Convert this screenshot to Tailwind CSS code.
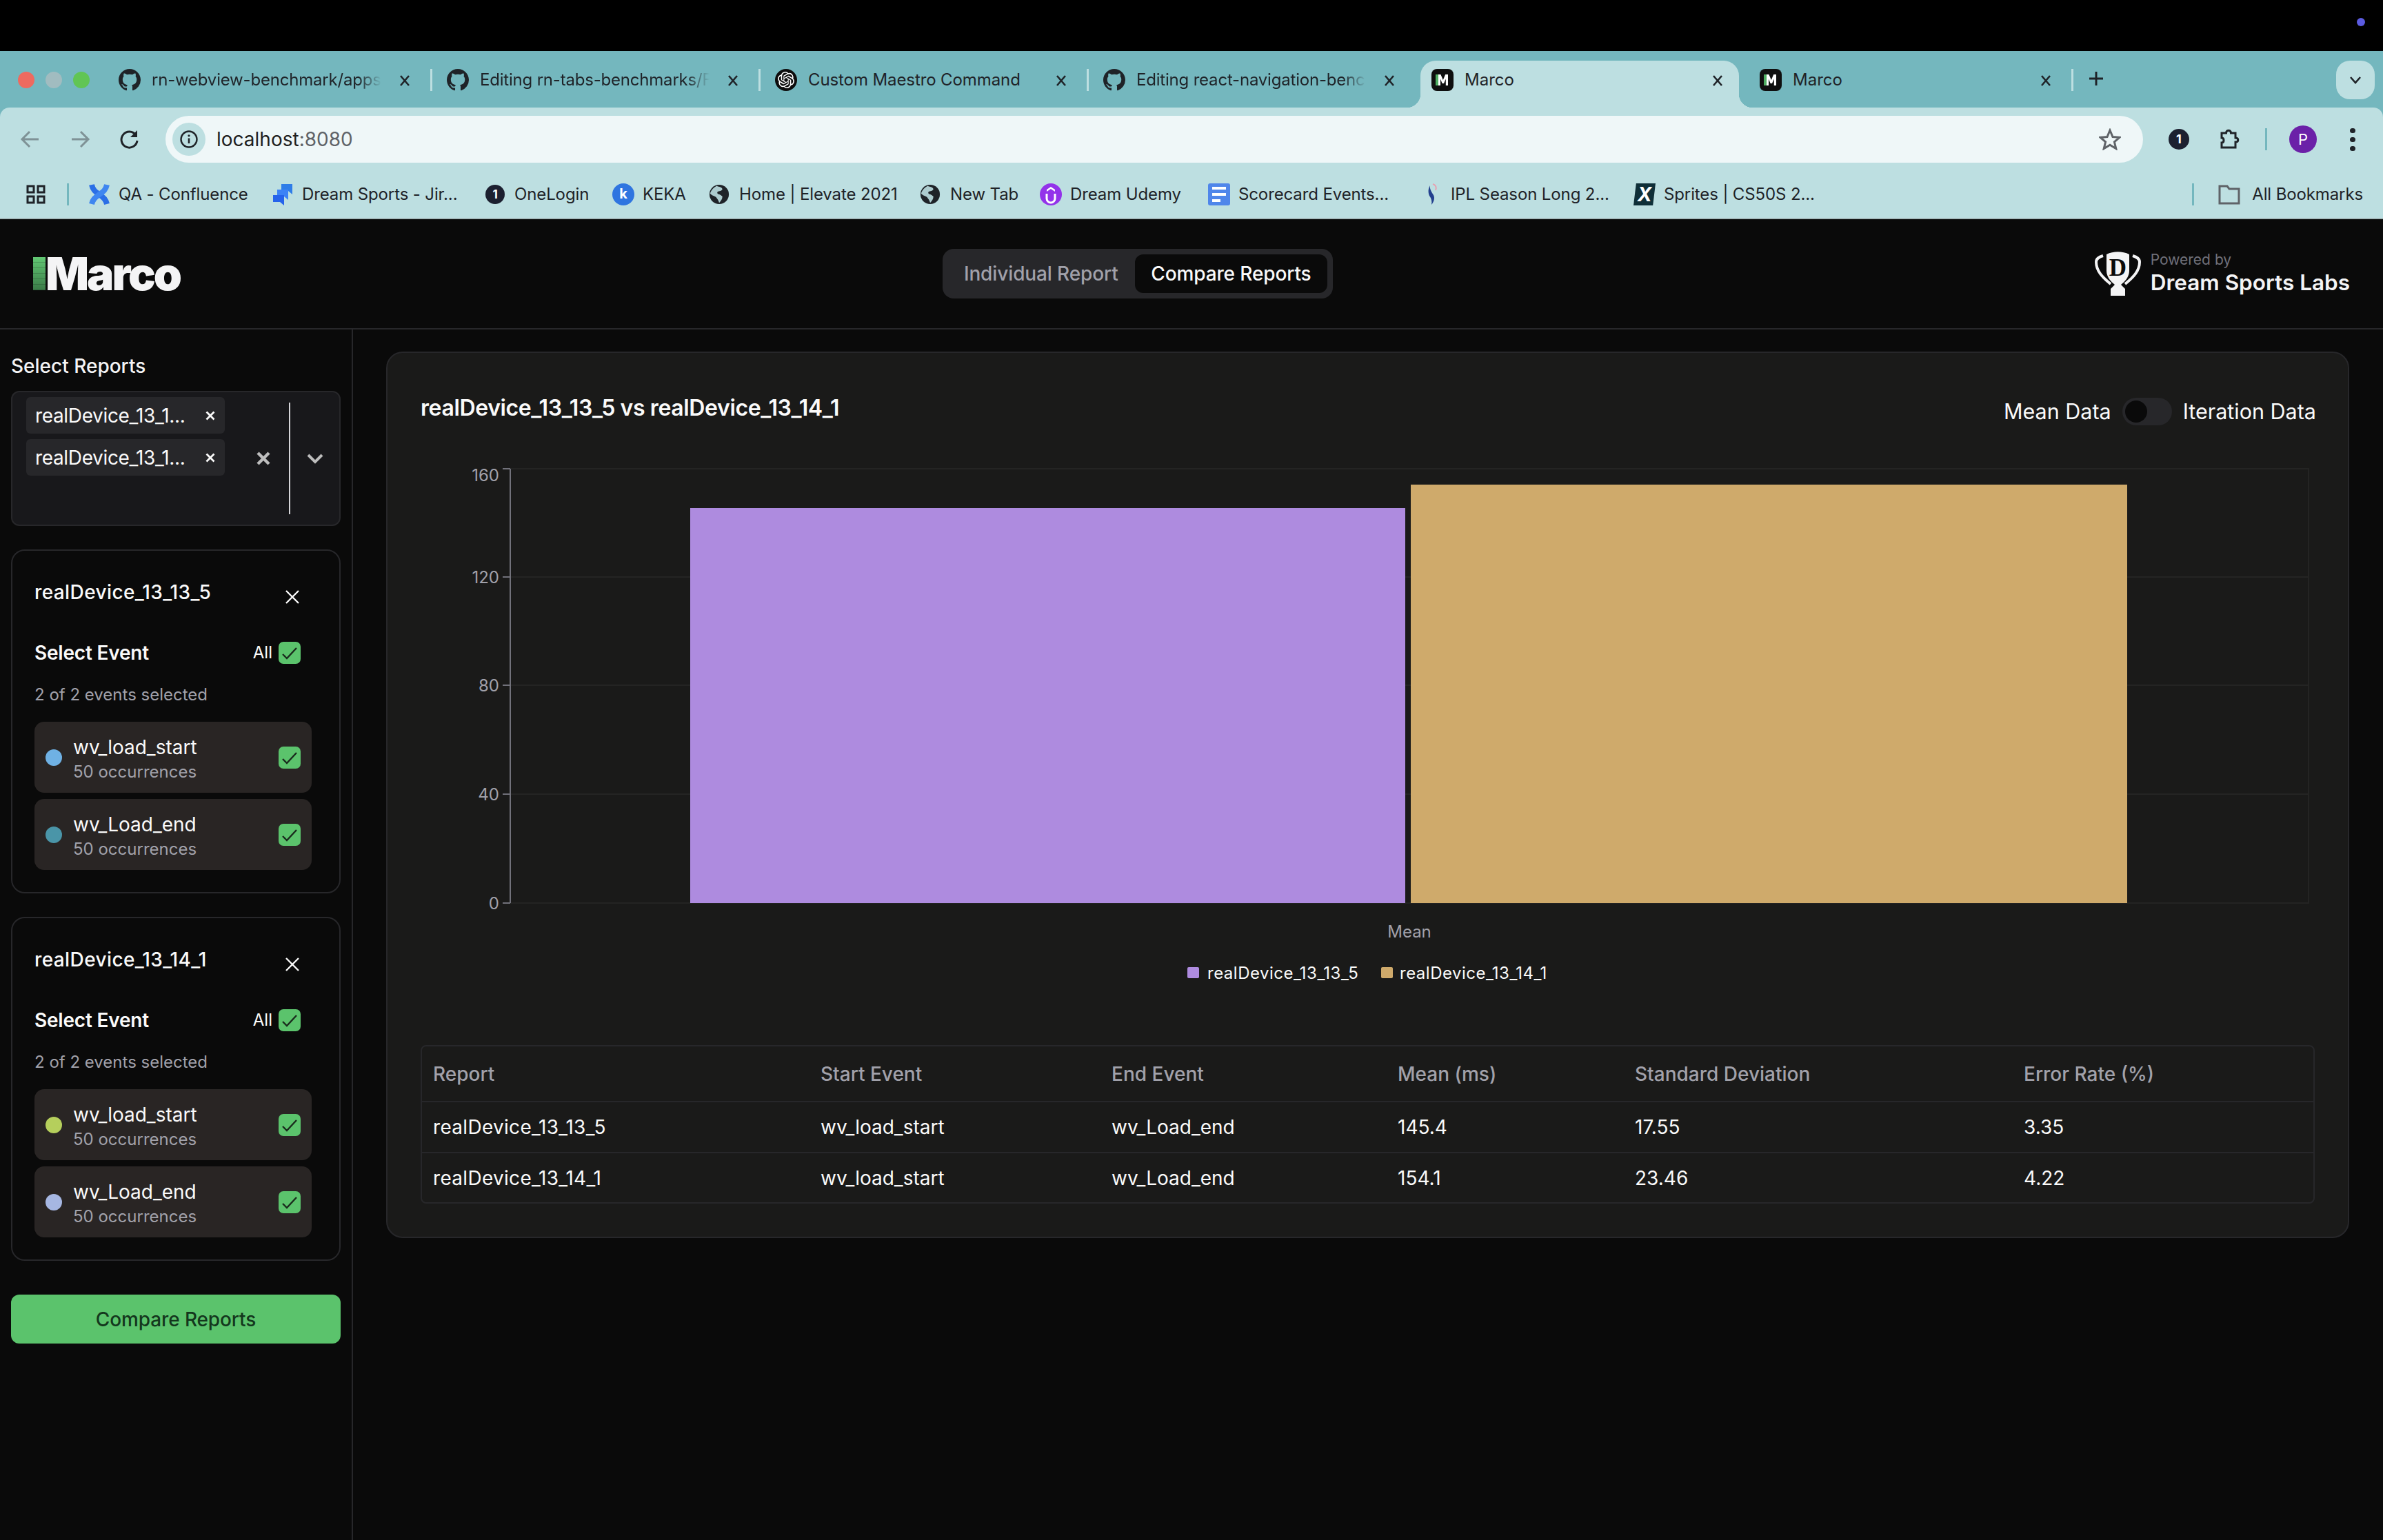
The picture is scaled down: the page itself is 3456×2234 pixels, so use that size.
<!DOCTYPE html>
<html lang="en">
<head>
    <meta charset="UTF-8">
    <title>Marco</title>
    <script src="https://cdn.jsdelivr.net/npm/@tailwindcss/browser@4"></script>
</head>
<body class="bg-[#0a0a0a] [font-family:Inter,sans-serif]">
<svg class="hidden">
    <symbol id="gh" viewBox="0 0 16 16"><path fill="#1f2328" d="M8 0C3.58 0 0 3.58 0 8c0 3.54 2.29 6.53 5.47 7.59.4.07.55-.17.55-.38 0-.19-.01-.82-.01-1.49-2.01.37-2.53-.49-2.69-.94-.09-.23-.48-.94-.82-1.13-.28-.15-.68-.52-.01-.53.63-.01 1.08.58 1.23.82.72 1.21 1.87.87 2.33.66.07-.52.28-.87.51-1.07-1.78-.2-3.64-.89-3.64-3.95 0-.87.31-1.59.82-2.15-.08-.2-.36-1.02.08-2.12 0 0 .67-.21 2.2.82.64-.18 1.32-.27 2-.27.68 0 1.36.09 2 .27 1.53-1.04 2.2-.82 2.2-.82.44 1.1.16 1.92.08 2.12.51.56.82 1.27.82 2.15 0 3.07-1.87 3.75-3.65 3.95.29.25.54.73.54 1.48 0 1.07-.01 1.93-.01 2.2 0 .21.15.46.55.38A8.013 8.013 0 0016 8c0-4.42-3.58-8-8-8z"/></symbol>
    <symbol id="tabx" viewBox="0 0 24 24"><path d="M6 5l12 14M18 5L6 19" stroke="#1f2328" stroke-width="2.6" fill="none"/></symbol>
    <symbol id="marco" viewBox="0 0 32 32"><rect width="32" height="32" rx="8" fill="#0f0f0f"/><rect x="6" y="8" width="4" height="16" fill="#4fae62"/><path d="M10 24V8h3.4l3.4 8 3.4-8H24v16h-3.2v-9.5L18 21h-2.4l-2.6-6.500V24z" fill="#fff"/></symbol>
    <symbol id="check" viewBox="0 0 32 32"><rect width="32" height="32" rx="7" fill="#5bc36c"/><path d="M6 18l6 6L26 9" stroke="#1a2b1d" stroke-width="2.400" fill="none"/></symbol>
    <symbol id="closex" viewBox="0 0 20 20"><path d="M1 1l18 18M19 1L1 19" stroke="#fafafa" stroke-width="2.400" fill="none"/></symbol>
    <symbol id="chipx" viewBox="0 0 14 14"><path d="M1.500 1.500l11 11M12.500 1.500l-11 11" stroke="#fafafa" stroke-width="2.800" fill="none"/></symbol>
    <symbol id="globe" viewBox="0 0 32 32"><circle cx="16" cy="16" r="15" fill="#1f2328"/><path d="M12 3c4 2 8 1 9 5-2 4-7 2-8 5 0 4 6 2 8 6 0 4-2 7-5 10-1-4-3-6-5-9-3-2-8-3-9-6 2-5 6-9 10-11z" fill="#bddfe1" opacity=".9"/><path d="M16 12c5-2 11 0 13 4l-2 7-5-4c-3-1-6-3-6-7z" fill="#1f2328"/></symbol>
</svg>

<div class="w-[3456px] h-[2234px] overflow-hidden">
    <!-- menu bar -->
    <div class="h-[74px] bg-black flex justify-end items-center pr-[26px]">
        <div class="w-[12px] h-[12px] rounded-full bg-[#5b5be0] -mt-[10px]"></div>
    </div>

    <!-- browser chrome -->
    <div class="bg-[#74b7be]">
        <div class="h-[82px] pt-[14px] flex">
            <div class="w-[149px] h-[32px] mt-[12px] flex gap-[16px] pl-[26px]">
                <div class="w-[24px] h-[24px] mt-[4px] rounded-full bg-[#ee6a5f]"></div>
                <div class="w-[24px] h-[24px] mt-[4px] rounded-full bg-[#a1bcc0]"></div>
                <div class="w-[24px] h-[24px] mt-[4px] rounded-full bg-[#61c554]"></div>
            </div>
            <div class="w-[476px] h-[68px] pt-[12px] pl-[23px] flex text-[24px] leading-[32px] tracking-[-0.2px] text-[#1f2328]">
                <svg class="w-[32px] h-[32px] shrink-0"><use href="#gh"/></svg>
                <span class="w-[333px] shrink-0 ml-[16px] whitespace-nowrap [mask-image:linear-gradient(to_right,black_90%,transparent_100%)]">rn-webview-benchmark/apps</span>
                <svg class="w-[24px] h-[24px] ml-[22px] mt-[5px] shrink-0"><use href="#tabx"/></svg>
                <div class="w-[3px] h-[32px] ml-[25px] -mr-[3px] shrink-0 bg-[#bddfe1]"></div>
            </div>
            <div class="w-[476px] h-[68px] pt-[12px] pl-[23px] flex text-[24px] leading-[32px] tracking-[-0.2px] text-[#1f2328]">
                <svg class="w-[32px] h-[32px] shrink-0"><use href="#gh"/></svg>
                <span class="w-[333px] shrink-0 ml-[16px] whitespace-nowrap [mask-image:linear-gradient(to_right,black_90%,transparent_100%)]">Editing rn-tabs-benchmarks/F</span>
                <svg class="w-[24px] h-[24px] ml-[22px] mt-[5px] shrink-0"><use href="#tabx"/></svg>
                <div class="w-[3px] h-[32px] ml-[25px] -mr-[3px] shrink-0 bg-[#bddfe1]"></div>
            </div>
            <div class="w-[476px] h-[68px] pt-[12px] pl-[23px] flex text-[24px] leading-[32px] tracking-[-0.1px] text-[#1f2328]">
                <svg class="w-[32px] h-[32px] shrink-0" viewBox="-4 -4 32 32"><circle cx="12" cy="12" r="16" fill="#0d0d0d"/><path fill="#fff" d="M22.2819 9.8211a5.9847 5.9847 0 0 0-.5157-4.9108 6.0462 6.0462 0 0 0-6.5098-2.9A6.0651 6.0651 0 0 0 4.9807 4.1818a5.9847 5.9847 0 0 0-3.9977 2.9 6.0462 6.0462 0 0 0 .7427 7.0966 5.98 5.98 0 0 0 .511 4.9107 6.051 6.051 0 0 0 6.5146 2.9001A5.9847 5.9847 0 0 0 13.2599 24a6.0557 6.0557 0 0 0 5.7718-4.2058 5.9894 5.9894 0 0 0 3.9977-2.9001 6.0557 6.0557 0 0 0-.7475-7.0729zm-9.022 12.6081a4.4755 4.4755 0 0 1-2.8764-1.0408l.1419-.0804 4.7783-2.7582a.7948.7948 0 0 0 .3927-.6813v-6.7369l2.02 1.1686a.071.071 0 0 1 .038.052v5.5826a4.504 4.504 0 0 1-4.4945 4.4944zm-9.6607-4.1254a4.4708 4.4708 0 0 1-.5346-3.0137l.142.0852 4.783 2.7582a.7712.7712 0 0 0 .7806 0l5.8428-3.3685v2.3324a.0804.0804 0 0 1-.0332.0615L9.74 19.9502a4.4992 4.4992 0 0 1-6.1408-1.6464zM2.3408 7.8956a4.485 4.485 0 0 1 2.3655-1.9728V11.6a.7664.7664 0 0 0 .3879.6765l5.8144 3.3543-2.0201 1.1685a.0757.0757 0 0 1-.071 0l-4.8303-2.7865A4.504 4.504 0 0 1 2.3408 7.872zm16.5963 3.8558L13.1038 8.364 15.1192 7.2a.0757.0757 0 0 1 .071 0l4.8303 2.7913a4.4944 4.4944 0 0 1-.6765 8.1042v-5.6772a.79.79 0 0 0-.407-.667zm2.0107-3.0231l-.142-.0852-4.7735-2.7818a.7759.7759 0 0 0-.7854 0L9.409 9.2297V6.8974a.0662.0662 0 0 1 .0284-.0615l4.8303-2.7866a4.4992 4.4992 0 0 1 6.6802 4.66zM8.3065 12.863l-2.02-1.1638a.0804.0804 0 0 1-.038-.0567V6.0742a4.4992 4.4992 0 0 1 7.3757-3.4537l-.142.0805L8.704 5.459a.7948.7948 0 0 0-.3927.6813zm1.0976-2.3654l2.602-1.4998 2.6069 1.4998v2.9994l-2.5974 1.4997-2.6067-1.4997Z"/></svg>
                <span class="w-[333px] shrink-0 ml-[16px] whitespace-nowrap">Custom Maestro Command</span>
                <svg class="w-[24px] h-[24px] ml-[22px] mt-[5px] shrink-0"><use href="#tabx"/></svg>
                <div class="w-[3px] h-[32px] ml-[25px] -mr-[3px] shrink-0 bg-[#bddfe1]"></div>
            </div>
            <div class="w-[476px] h-[68px] pt-[12px] pl-[23px] flex text-[24px] leading-[32px] tracking-[-0.2px] text-[#1f2328]">
                <svg class="w-[32px] h-[32px] shrink-0"><use href="#gh"/></svg>
                <span class="w-[333px] shrink-0 ml-[16px] whitespace-nowrap [mask-image:linear-gradient(to_right,black_90%,transparent_100%)]">Editing react-navigation-benc</span>
                <svg class="w-[24px] h-[24px] ml-[22px] mt-[5px] shrink-0"><use href="#tabx"/></svg>
            </div>
            <!-- active tab -->
            <div class="w-[476px] h-[68px] px-[7px]">
                <div class="relative h-full bg-[#bddfe1] rounded-t-[22px] pt-[12px] pl-[16px] flex text-[24px] leading-[32px] text-[#1f2328]">
                    <div class="absolute -left-[20px] bottom-0 w-[20px] h-[20px] bg-[radial-gradient(circle_at_0_0,#74b7be_20px,#bddfe1_20.5px)]"></div>
                    <div class="absolute -right-[20px] bottom-0 w-[20px] h-[20px] bg-[radial-gradient(circle_at_100%_0,#74b7be_20px,#bddfe1_20.5px)]"></div>
                    <svg class="w-[32px] h-[32px] shrink-0"><use href="#marco"/></svg>
                    <span class="w-[333px] shrink-0 ml-[16px]">Marco</span>
                    <svg class="w-[24px] h-[24px] ml-[22px] mt-[5px] shrink-0"><use href="#tabx"/></svg>
                </div>
            </div>
            <div class="w-[476px] h-[68px] pt-[12px] pl-[23px] flex text-[24px] leading-[32px] text-[#1f2328]">
                <svg class="w-[32px] h-[32px] shrink-0"><use href="#marco"/></svg>
                <span class="w-[333px] shrink-0 ml-[16px]">Marco</span>
                <svg class="w-[24px] h-[24px] ml-[22px] mt-[5px] shrink-0"><use href="#tabx"/></svg>
                <div class="w-[3px] h-[32px] ml-[25px] -mr-[3px] shrink-0 bg-[#bddfe1]"></div>
            </div>
            <svg class="w-[24px] h-[24px] ml-[23px] mt-[14px] shrink-0" viewBox="0 0 24 24"><path d="M12 2v20M2 12h20" stroke="#1f2328" stroke-width="3"/></svg>
            <div class="w-[56px] h-[56px] ml-[336px] shrink-0 rounded-[20px] bg-[#bddfe1] flex items-center justify-center">
                <svg class="w-[20px] h-[14px]" viewBox="0 0 20 14"><path d="M3 3l7 8 7-8" stroke="#1f2328" stroke-width="2.600" fill="none"/></svg>
            </div>
        </div>

        <div class="h-[162px] pt-[12px] bg-[#bddfe1] rounded-t-[14px] border-b-2 border-[#a7bcbe]">
            <!-- toolbar -->
            <div class="h-[68px] flex items-center pl-[28px]">
                <svg class="w-[32px] h-[32px]" viewBox="0 0 32 32"><path d="M28 16H5M15 5L4 16l11 11" stroke="#7f9296" stroke-width="3" fill="none"/></svg>
                <svg class="w-[32px] h-[32px] ml-[40px]" viewBox="0 0 32 32"><path d="M4 16h23M17 5l11 11-11 11" stroke="#7f9296" stroke-width="3" fill="none"/></svg>
                <svg class="w-[32px] h-[32px] ml-[40px]" viewBox="0 0 32 32"><path d="M25 10a11.500 11.500 0 1 0 2 8" stroke="#1f2328" stroke-width="3" fill="none"/><path d="M27 3v10H17z" fill="#1f2328"/></svg>
                <div class="w-[2868px] h-[68px] ml-[36px] bg-[#eff7f8] rounded-full flex items-center pl-[10px] pr-[32px]">
                    <div class="w-[48px] h-[48px] rounded-full bg-[#bddfe1] flex items-center justify-center">
                        <svg class="w-[26px] h-[26px]" viewBox="0 0 26 26"><circle cx="13" cy="13" r="11.500" stroke="#1f2328" stroke-width="2.400" fill="none"/><path d="M13 11.500v7.500" stroke="#1f2328" stroke-width="2.600"/><circle cx="13" cy="7.800" r="1.600" fill="#1f2328"/></svg>
                    </div>
                    <span class="ml-[16px] text-[28px] leading-[34px] text-[#1f1f1f]">localhost<span class="text-[#5f6368]">:8080</span></span>
                    <svg class="w-[32px] h-[32px] ml-auto" viewBox="0 0 32 32"><path d="M16 3l4 9.500 10 .8-7.600 6.500 2.400 9.800L16 24.300 7.200 29.600l2.400-9.800L2 13.300l10-.8z" stroke="#5f6368" stroke-width="3" fill="none"/></svg>
                </div>
                <div class="w-[30px] h-[30px] ml-[37px] rounded-full bg-[#1c2030] text-white text-[18px] leading-[30px] font-bold text-center">1</div>
                <svg class="w-[32px] h-[32px] ml-[42px]" viewBox="0 0 32 32"><path d="M5 7h6.500c0-5 7-5 7 0H25v7c5 0 5 6 0 6v8H5v-7c4 0 4-7 0-7z" stroke="#1f2328" stroke-width="3" fill="none"/></svg>
                <div class="w-[3px] h-[32px] ml-[36px] bg-[#74b7be]"></div>
                <div class="w-[40px] h-[40px] ml-[32px] rounded-full bg-[#6b21a8] text-white text-[22px] leading-[40px] text-center">P</div>
                <div class="w-[8px] ml-[48px] flex flex-col gap-[6px]">
                    <div class="w-[8px] h-[7px] rounded-full bg-[#1f2328]"></div>
                    <div class="w-[8px] h-[7px] rounded-full bg-[#1f2328]"></div>
                    <div class="w-[8px] h-[7px] rounded-full bg-[#1f2328]"></div>
                </div>
            </div>

            <!-- bookmarks bar -->
            <div class="h-[68px] mt-[12px] flex items-center pl-[38px] text-[24px] tracking-[-0.12px] text-[#1f2328] whitespace-nowrap">
                <svg class="w-[28px] h-[28px]" viewBox="0 0 28 28"><path d="M2 2h9v9H2zM17 2h9v9h-9zM2 17h9v9H2zM17 17h9v9h-9z" stroke="#1f2328" stroke-width="3" fill="none"/></svg>
                <div class="w-[3px] h-[32px] ml-[31px] mr-[28px] bg-[#74b7be]"></div>
                <div class="flex items-center w-[266px]">
                    <svg class="w-[32px] h-[32px] mr-[12px] shrink-0" viewBox="0 0 32 32"><path d="M5 2c2 9 7 11 11 14 5 4 9 6 11 14" stroke="#2b6fe6" stroke-width="8" fill="none"/><path d="M27 2c-2 9-7 11-11 14-5 4-9 6-11 14" stroke="#3f86f0" stroke-width="8" fill="none"/></svg>
                    QA - Confluence
                </div>
                <div class="flex items-center w-[308px]">
                    <svg class="w-[32px] h-[34px] mr-[12px] shrink-0" viewBox="0 0 32 34"><path d="M14 2h16v15l-6-5H14z" fill="#2f7de8"/><path d="M8 10h16v15l-6-5H8z" fill="#3b82f6"/><path d="M2 18h16v15l-6-5H2z" fill="#2563eb"/></svg>
                    Dream Sports - Jir...
                </div>
                <div class="flex items-center w-[186px]">
                    <div class="w-[28px] h-[28px] mr-[14px] ml-[2px] shrink-0 rounded-full bg-[#1c2030] text-white text-[17px] leading-[28px] font-bold text-center">1</div>
                    OneLogin
                </div>
                <div class="flex items-center w-[140px]">
                    <div class="w-[32px] h-[32px] mr-[12px] shrink-0 rounded-full bg-[#2f75e0] text-white text-[20px] leading-[30px] font-bold text-center">k</div>
                    KEKA
                </div>
                <div class="flex items-center w-[306px]">
                    <svg class="w-[30px] h-[30px] mr-[14px] shrink-0"><use href="#globe"/></svg>
                    Home | Elevate 2021
                </div>
                <div class="flex items-center w-[174px]">
                    <svg class="w-[30px] h-[30px] mr-[14px] shrink-0"><use href="#globe"/></svg>
                    New Tab
                </div>
                <div class="flex items-center w-[244px]">
                    <svg class="w-[32px] h-[32px] mr-[12px] shrink-0" viewBox="0 0 32 32"><circle cx="16" cy="16" r="16" fill="#9333ea"/><path d="M10 15v7a6 6 0 0 0 12 0v-7" stroke="#fff" stroke-width="3" fill="none"/><path d="M16 5l6 4v3l-6-4-6 4V9z" fill="#fff"/></svg>
                    Dream Udemy
                </div>
                <div class="flex items-center w-[308px]">
                    <svg class="w-[32px] h-[32px] mr-[12px] shrink-0" viewBox="0 0 32 32"><rect width="32" height="32" rx="3" fill="#4f86ea"/><path d="M6 5h20v4H6zM6 14h20v4H6zM6 23h12v4H6z" fill="#fff"/></svg>
                    Scorecard Events...
                </div>
                <div class="flex items-center w-[309px]">
                    <svg class="w-[20px] h-[32px] mr-[18px] ml-[6px] shrink-0" viewBox="0 0 20 32"><path d="M8 3c-1 5 2 9 5 14 2 4 1 9-3 14 1-5 0-9-3-13C5 13 5 8 8 3z" fill="#23408e"/><path d="M12 1c4 1 6 5 4 9" stroke="#e8a0b0" stroke-width="2" fill="none"/></svg>
                    IPL Season Long 2...
                </div>
                <div class="flex items-center">
                    <div class="w-[32px] h-[32px] mr-[12px] shrink-0 bg-[#0f2f38] text-white text-[28px] leading-[32px] font-bold italic text-center [clip-path:polygon(12%_0,100%_0,88%_100%,0_100%)]">X</div>
                    Sprites | CS50S 2...
                </div>
                <div class="ml-auto flex items-center pr-[29px]">
                    <div class="w-[3px] h-[32px] mr-[35px] bg-[#74b7be]"></div>
                    <svg class="w-[32px] h-[32px] mr-[17px]" viewBox="0 0 32 32"><path d="M2 4h11l3 4h14v21H2z" stroke="#5f6368" stroke-width="3" fill="none"/></svg>
                    All Bookmarks
                </div>
            </div>
        </div>
    </div>

    <!-- app header -->
    <header class="h-[160px] flex justify-between items-center pl-[48px] pr-[48px] border-b-2 border-[#27272a]">
        <div class="flex items-center h-[48px] w-[214px]">
            <div class="w-[18px] h-[48px] bg-[repeating-linear-gradient(to_bottom,transparent_0,transparent_7px,rgba(0,0,0,.18)_7px,rgba(0,0,0,.18)_8px),linear-gradient(to_bottom,#62c873,#3b7a48)]"></div>
            <span class="text-[66px] leading-[48px] font-black tracking-[-3px] text-[#f4f4f5]">Marco</span>
        </div>
        <div class="w-[566px] h-[72px] bg-[#27272a] rounded-[16px] flex items-center pl-[31px] pr-[8px] justify-between text-[28px] font-medium tracking-[-0.12px]">
            <span class="text-[#a1a1aa]">Individual Report</span>
            <span class="w-[279px] h-[56px] rounded-[12px] bg-[#0a0a0a] text-[#fafafa] leading-[56px] text-center">Compare Reports</span>
        </div>
        <div class="flex items-center gap-[14px]">
            <svg class="w-[67px] h-[64px]" viewBox="0 0 65 64">
                <path d="M16 4c10-5 23-5 33 0v24c0 9-7 16-12 20l6 6v10H22V54l6-6c-5-4-12-11-12-20z" fill="#f4f4f5"/>
                <path d="M11 6c-6 2-10 4-10 9 0 13 9 22 21 32" stroke="#f4f4f5" stroke-width="4" fill="none"/>
                <path d="M54 6c6 2 10 4 10 9 0 13-9 22-21 32" stroke="#f4f4f5" stroke-width="4" fill="none"/>
                <text x="32.500" y="35" text-anchor="middle" font-size="35" font-weight="700" fill="#0a0a0a" font-family="Liberation Serif">D</text>
            </svg>
            <div class="flex flex-col">
                <span class="text-[21px] leading-[26px] text-[#71717a]">Powered by</span>
                <span class="text-[31.5px] leading-[40px] font-semibold text-[#f4f4f5]">Dream Sports Labs</span>
            </div>
        </div>
    </header>

    <div class="flex">
        <!-- sidebar -->
        <aside class="w-[512px] h-[1756px] shrink-0 border-r-2 border-[#27272a] px-[16px] pt-[35px]">
            <div class="text-[28px] leading-[36px] font-medium text-[#f4f4f5]">Select Reports</div>
            <div class="h-[196px] mt-[18px] bg-[#18181b] border-2 border-[#27272a] rounded-[12px] flex text-[28px] text-[#fafafa]">
                <div class="pl-[20px] pt-[7px] flex flex-col gap-[8px]">
                    <div class="w-[288px] h-[53px] bg-[#27272a] rounded-[6px] flex items-center pl-[13px]">
                        <span class="w-[219px] whitespace-nowrap tracking-[-0.35px]">realDevice_13_1...</span>
                        <svg class="w-[14px] h-[14px] ml-[28px]"><use href="#chipx"/></svg>
                    </div>
                    <div class="w-[288px] h-[53px] bg-[#27272a] rounded-[6px] flex items-center pl-[13px]">
                        <span class="w-[219px] whitespace-nowrap tracking-[-0.35px]">realDevice_13_1...</span>
                        <svg class="w-[14px] h-[14px] ml-[28px]"><use href="#chipx"/></svg>
                    </div>
                </div>
                <div class="flex items-center">
                    <svg class="w-[20px] h-[20px] ml-[46px]" viewBox="0 0 20 20"><path d="M2 2l16 16M18 2L2 18" stroke="#bdbdbd" stroke-width="4.500" fill="none"/></svg>
                    <div class="w-[2px] h-[162px] ml-[27px] bg-[#d4d4d8]"></div>
                    <svg class="w-[24px] h-[16px] ml-[24px]" viewBox="0 0 24 16"><path d="M2 3l10 10L22 3" stroke="#bdbdbd" stroke-width="4" fill="none"/></svg>
                </div>
            </div>

            <!-- report 1 -->
            <div class="mt-[34px] border-2 border-[#27272a] rounded-[20px] pl-[32px] pr-[40px] pt-[42px] pb-[32px]">
                <div class="flex justify-between pr-[18px]">
                    <span class="text-[28px] leading-[36px] font-medium tracking-[0.4px] text-[#fafafa]">realDevice_13_13_5</span>
                    <svg class="w-[20px] h-[20px] mt-[15px]"><use href="#closex"/></svg>
                </div>
                <div class="mt-[52px] h-[36px] flex items-center justify-between pr-[16px]">
                    <span class="text-[28px] font-semibold tracking-[-0.2px] text-[#fafafa]">Select Event</span>
                    <div class="flex items-center gap-[9px] text-[24px] text-[#fafafa]">All<svg class="w-[32px] h-[32px]"><use href="#check"/></svg></div>
                </div>
                <div class="mt-[27px] text-[24px] leading-[32px] text-[#a1a1aa]">2 of 2 events selected</div>
                <div class="mt-[23px] flex flex-col gap-[9px]">
                    <div class="h-[103px] bg-[#292524] rounded-[14px] flex items-center pl-[16px] pr-[16px]">
                        <div class="w-[24px] h-[24px] rounded-full bg-[#6fb1e4]"></div>
                        <div class="ml-[16px] pt-[5px] flex flex-col">
                            <span class="text-[28px] leading-[36px] text-[#fafafa]">wv_load_start</span>
                            <span class="mt-[2px] text-[24px] leading-[32px] text-[#a1a1aa]">50 occurrences</span>
                        </div>
                        <svg class="w-[32px] h-[32px] ml-auto"><use href="#check"/></svg>
                    </div>
                    <div class="h-[103px] bg-[#292524] rounded-[14px] flex items-center pl-[16px] pr-[16px]">
                        <div class="w-[24px] h-[24px] rounded-full bg-[#4a95a8]"></div>
                        <div class="ml-[16px] pt-[5px] flex flex-col">
                            <span class="text-[28px] leading-[36px] text-[#fafafa]">wv_Load_end</span>
                            <span class="mt-[2px] text-[24px] leading-[32px] text-[#a1a1aa]">50 occurrences</span>
                        </div>
                        <svg class="w-[32px] h-[32px] ml-auto"><use href="#check"/></svg>
                    </div>
                </div>
            </div>

            <!-- report 2 -->
            <div class="mt-[34px] border-2 border-[#27272a] rounded-[20px] pl-[32px] pr-[40px] pt-[42px] pb-[32px]">
                <div class="flex justify-between pr-[18px]">
                    <span class="text-[28px] leading-[36px] font-medium tracking-[0.4px] text-[#fafafa]">realDevice_13_14_1</span>
                    <svg class="w-[20px] h-[20px] mt-[15px]"><use href="#closex"/></svg>
                </div>
                <div class="mt-[52px] h-[36px] flex items-center justify-between pr-[16px]">
                    <span class="text-[28px] font-semibold tracking-[-0.2px] text-[#fafafa]">Select Event</span>
                    <div class="flex items-center gap-[9px] text-[24px] text-[#fafafa]">All<svg class="w-[32px] h-[32px]"><use href="#check"/></svg></div>
                </div>
                <div class="mt-[27px] text-[24px] leading-[32px] text-[#a1a1aa]">2 of 2 events selected</div>
                <div class="mt-[23px] flex flex-col gap-[9px]">
                    <div class="h-[103px] bg-[#292524] rounded-[14px] flex items-center pl-[16px] pr-[16px]">
                        <div class="w-[24px] h-[24px] rounded-full bg-[#b5cf5c]"></div>
                        <div class="ml-[16px] pt-[5px] flex flex-col">
                            <span class="text-[28px] leading-[36px] text-[#fafafa]">wv_load_start</span>
                            <span class="mt-[2px] text-[24px] leading-[32px] text-[#a1a1aa]">50 occurrences</span>
                        </div>
                        <svg class="w-[32px] h-[32px] ml-auto"><use href="#check"/></svg>
                    </div>
                    <div class="h-[103px] bg-[#292524] rounded-[14px] flex items-center pl-[16px] pr-[16px]">
                        <div class="w-[24px] h-[24px] rounded-full bg-[#a6b7e2]"></div>
                        <div class="ml-[16px] pt-[5px] flex flex-col">
                            <span class="text-[28px] leading-[36px] text-[#fafafa]">wv_Load_end</span>
                            <span class="mt-[2px] text-[24px] leading-[32px] text-[#a1a1aa]">50 occurrences</span>
                        </div>
                        <svg class="w-[32px] h-[32px] ml-auto"><use href="#check"/></svg>
                    </div>
                </div>
            </div>

            <button class="w-full h-[71px] mt-[49px] bg-[#5bc36c] rounded-[12px] text-[28px] font-medium tracking-[-0.12px] text-[#14371d]">Compare Reports</button>
        </aside>

        <!-- main -->
        <main class="flex-1 pl-[48px] pr-[49px] pt-[32px]">
            <div class="bg-[#1a1a19] border-2 border-[#27272a] rounded-[24px] px-[48px] pt-[64px] pb-[48px]">
                <div class="flex justify-between h-[42px]">
                    <h2 class="text-[32px] leading-[32px] font-semibold tracking-[-0.38px] text-[#fafafa]">realDevice_13_13_5 vs realDevice_13_14_1</h2>
                    <div class="flex items-center text-[30.5px] text-[#fafafa] -mr-[2px]">
                        Mean Data
                        <div class="w-[72px] h-[40px] mx-[16px] rounded-full bg-[#27272a] p-[4px]"><div class="w-[32px] h-[32px] rounded-full bg-[#0a0a0a]"></div></div>
                        Iteration Data
                    </div>
                </div>

                <!-- chart -->
                <svg class="block mt-[24px] [font-family:Inter,sans-serif]" width="2747" height="800" viewBox="610 640 2747 800">
                    <g stroke="#242423" stroke-width="2" fill="none">
                        <path d="M740 678H3348V1308H740"/>
                        <path d="M740 835H3348M740 992H3348M740 1150H3348"/>
                    </g>
                    <path d="M740 678V1308M729 678H740M729 835H740M729 992H740M729 1150H740M729 1308H740" stroke="#71717a" stroke-width="2" fill="none"/>
                    <g fill="#a1a1aa" font-size="24" text-anchor="end">
                        <text x="724" y="696">160</text>
                        <text x="724" y="844">120</text>
                        <text x="724" y="1001">80</text>
                        <text x="724" y="1159">40</text>
                        <text x="724" y="1317">0</text>
                    </g>
                    <rect x="1001" y="735" width="1037" height="573" fill="#ae8bdf"/>
                    <rect x="2046" y="701" width="1039" height="607" fill="#cfaa6b"/>
                    <text x="2044" y="1358" fill="#a1a1aa" font-size="24" text-anchor="middle">Mean</text>
                    <rect x="1722" y="1401" width="17" height="16" rx="2" fill="#ae8bdf"/>
                    <text x="1751" y="1418" fill="#fafafa" font-size="24" letter-spacing="0.5">realDevice_13_13_5</text>
                    <rect x="2003" y="1401" width="17" height="16" rx="2" fill="#cfaa6b"/>
                    <text x="2030" y="1418" fill="#fafafa" font-size="24" letter-spacing="0.5">realDevice_13_14_1</text>
                </svg>

                <!-- table -->
                <div class="mt-[74px] border-2 border-[#27272a] rounded-[8px]">
                    <table class="w-full table-fixed text-left text-[28px]">
                        <thead>
                            <tr class="h-[80px] border-b-2 border-[#27272a] text-[#a1a1aa]">
                                <th class="w-[563px] pl-[16px] font-medium">Report</th>
                                <th class="w-[422px] pl-[15px] font-medium">Start Event</th>
                                <th class="w-[415px] pl-[15px] font-medium">End Event</th>
                                <th class="w-[344px] pl-[15px] font-medium">Mean (ms)</th>
                                <th class="w-[564px] pl-[15px] font-medium">Standard Deviation</th>
                                <th class="pl-[15px] font-medium">Error Rate (%)</th>
                            </tr>
                        </thead>
                        <tbody class="text-[#fafafa]">
                            <tr class="h-[74px] border-b-2 border-[#27272a]">
                                <td class="pl-[16px] tracking-[0.3px]">realDevice_13_13_5</td>
                                <td class="pl-[15px]">wv_load_start</td>
                                <td class="pl-[15px]">wv_Load_end</td>
                                <td class="pl-[15px]">145.4</td>
                                <td class="pl-[15px]">17.55</td>
                                <td class="pl-[15px]">3.35</td>
                            </tr>
                            <tr class="h-[72px]">
                                <td class="pl-[16px] tracking-[0.3px]">realDevice_13_14_1</td>
                                <td class="pl-[15px]">wv_load_start</td>
                                <td class="pl-[15px]">wv_Load_end</td>
                                <td class="pl-[15px]">154.1</td>
                                <td class="pl-[15px]">23.46</td>
                                <td class="pl-[15px]">4.22</td>
                            </tr>
                        </tbody>
                    </table>
                </div>
            </div>
        </main>
    </div>
</div>
</body>
</html>
